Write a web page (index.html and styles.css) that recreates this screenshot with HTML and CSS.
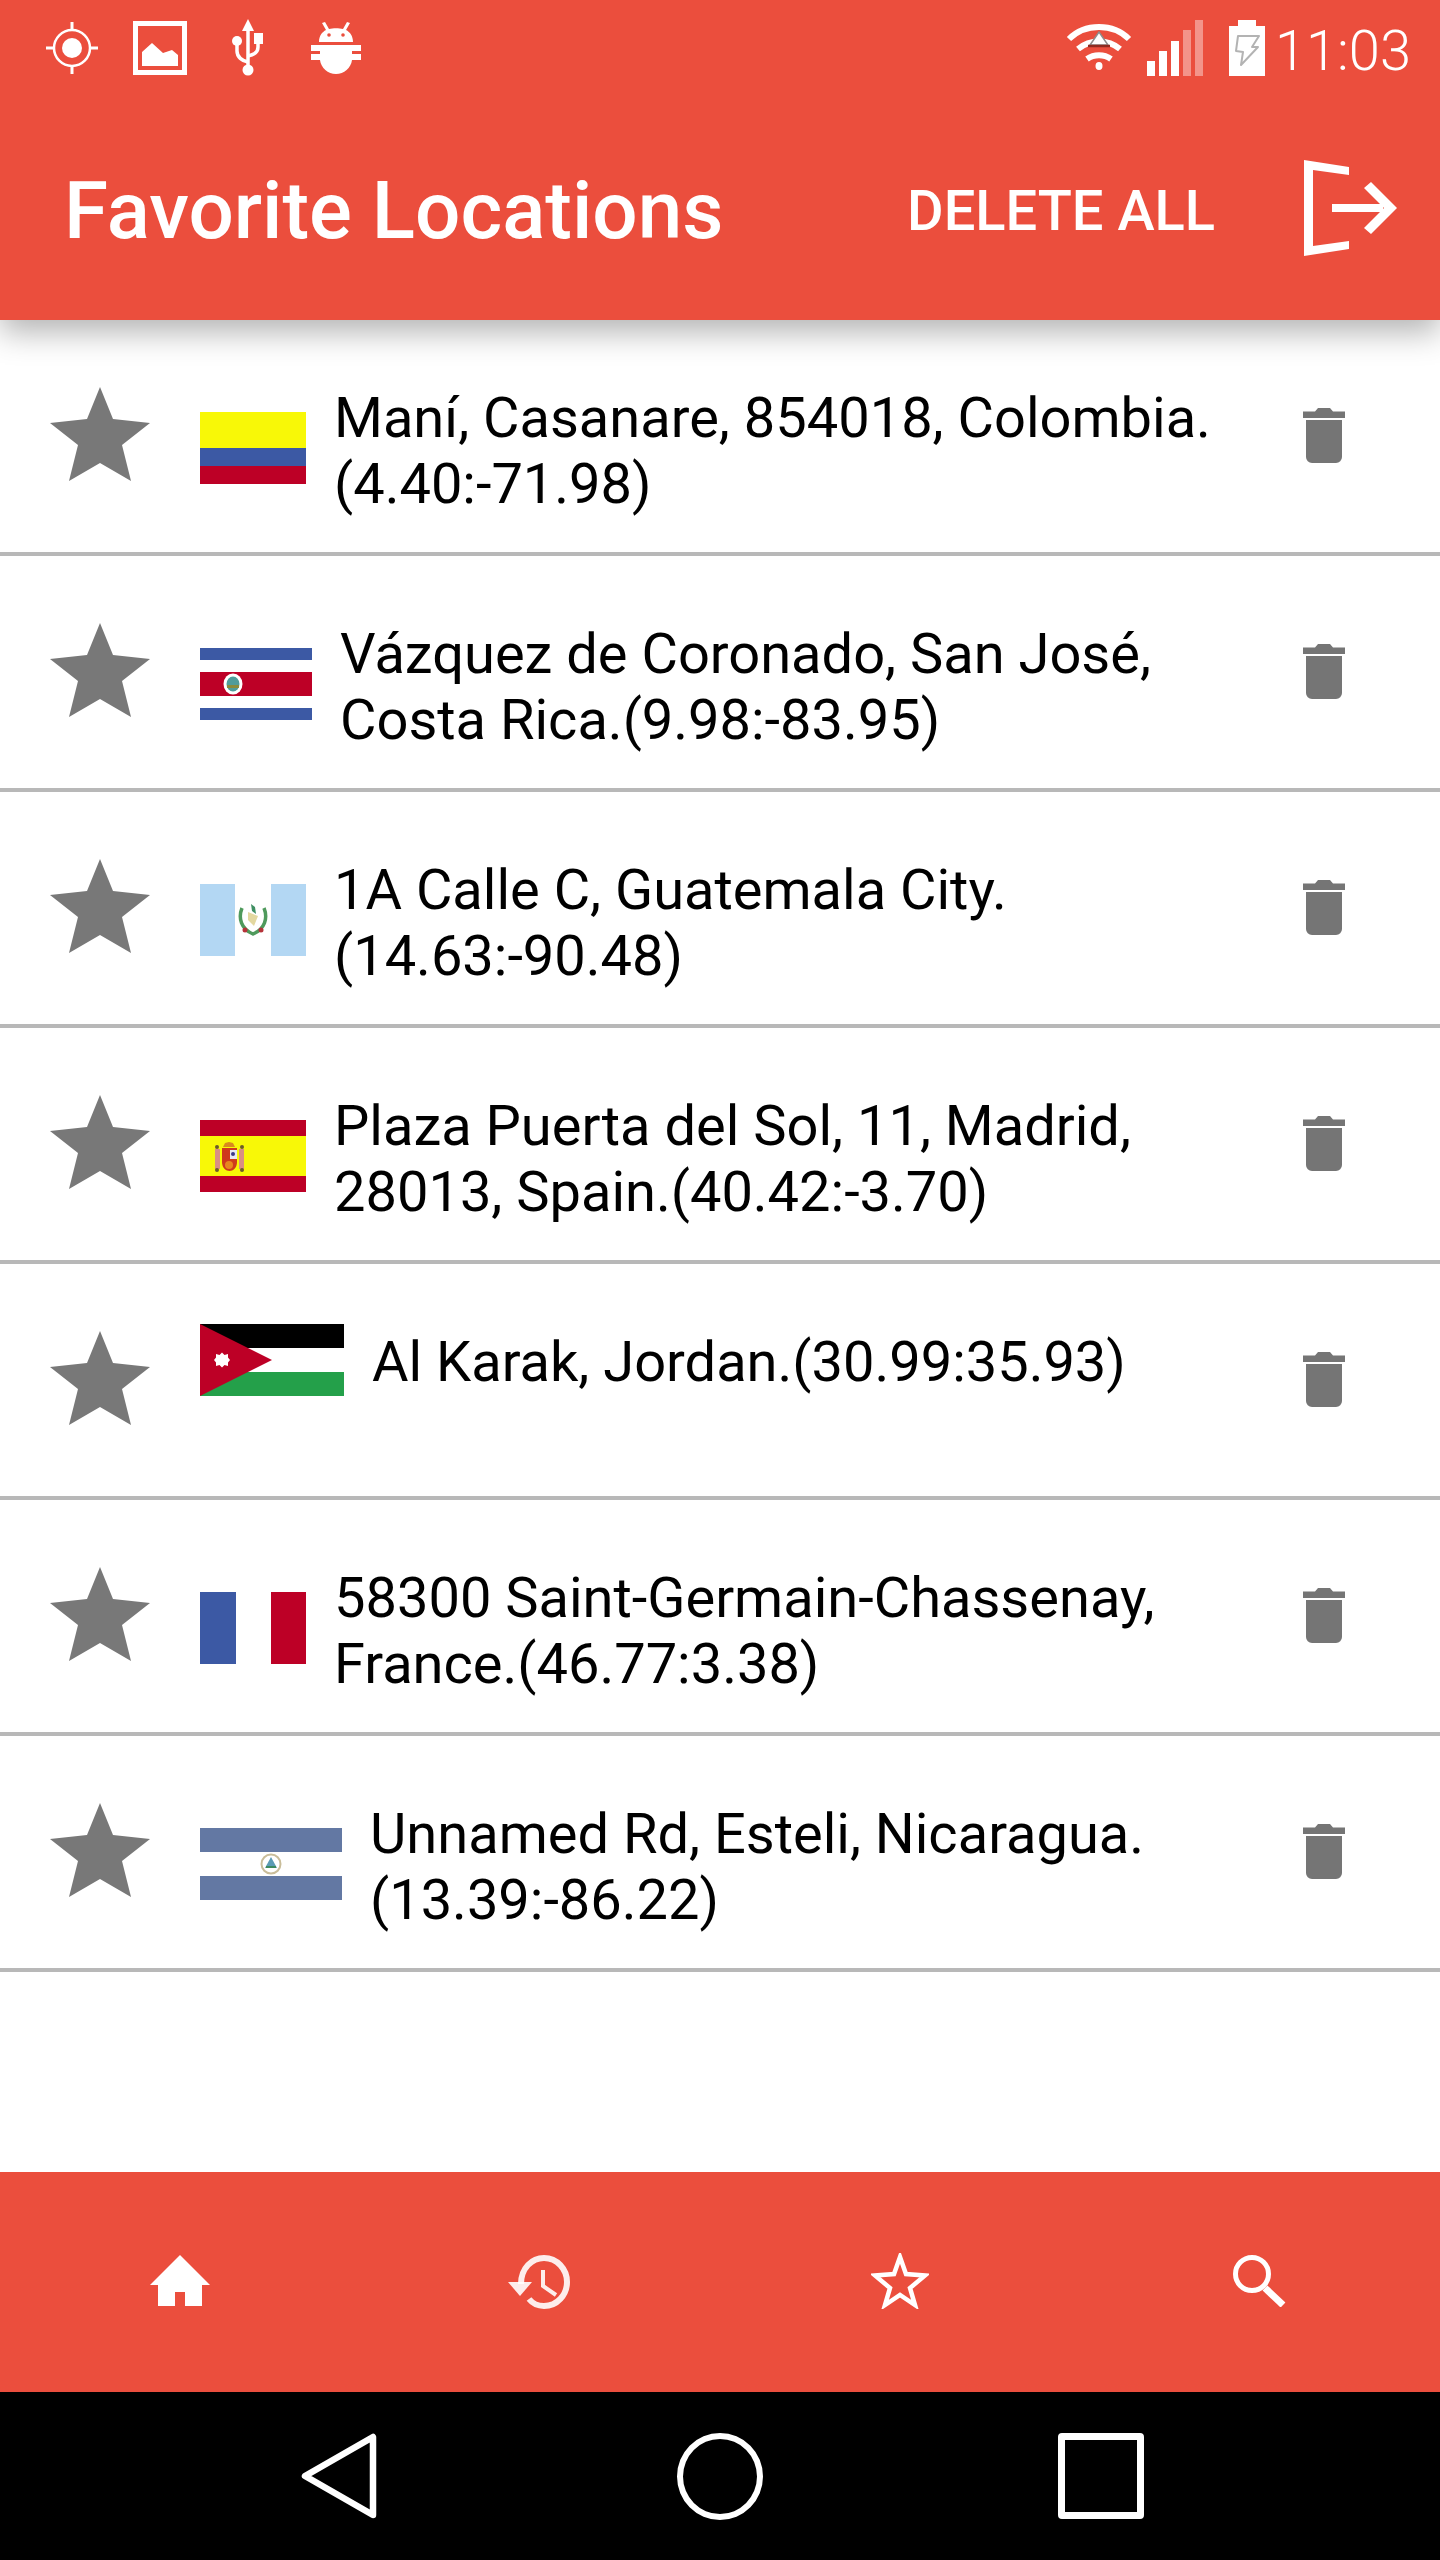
FILE: index.html
```html
<!DOCTYPE html>
<html lang="en">
<head>
  <meta charset="UTF-8" />
  <meta name="viewport" content="width=device-width, initial-scale=1.0" />
  <title>Favorite Locations</title>
  <link rel="stylesheet" href="styles.css">
</head>
<body>
  <svg class="defs" width="0" height="0">
    <defs>
      <symbol id="star" viewBox="0 0 100 94">
        <polygon points="50,0 63,32 100,36 72,58 81,94 50,76 19,94 28,58 0,36 37,32" />
      </symbol>
      <symbol id="trash" viewBox="0 0 42 55">
        <path d="M0 3.500h12l3-3.500h12l3 3.500h12v6.500H0zM3 12h36v37a6 6 0 0 1-6 6H9a6 6 0 0 1-6-6z" />
      </symbol>
    </defs>
  </svg>

  <div class="app">
    <header class="top">
      <div class="status">
        <div class="status-left">
          <svg class="ic-gps" viewBox="0 0 52 52">
            <circle cx="26" cy="26" r="18" fill="none" stroke="#fff" stroke-width="2.500" />
            <circle cx="26" cy="26" r="10" fill="#fff" />
            <path d="M26 0v8M26 44v8M0 26h8M44 26h8" stroke="#fff" stroke-width="3" />
          </svg>
          <svg class="ic-image" viewBox="0 0 54 54">
            <rect x="2.500" y="2.500" width="49" height="49" fill="none" stroke="#fff" stroke-width="5" />
            <path d="M9 31l10-9 11 10 9-3 6 5v11H9z" fill="#fff" />
          </svg>
          <svg class="ic-usb" viewBox="0 0 32 57">
            <path d="M16 0l6 12H10z" fill="#fff" />
            <g fill="none" stroke="#fff" stroke-width="3.500">
              <path d="M16 10v38" />
              <path d="M5 24v8c0 6 5 10 11 11" />
              <path d="M26 24v4c0 5-4 8-10 9" />
            </g>
            <circle cx="5" cy="22" r="5" fill="#fff" />
            <rect x="22" y="14" width="9" height="11" fill="#fff" />
            <circle cx="16" cy="51" r="5.500" fill="#fff" />
          </svg>
          <svg class="ic-android" viewBox="0 0 50 52">
            <path d="M8 20c0-6 3-10 7-12L11 1l3-1 4 7c4-1 10-1 14 0l4-7 3 1-4 7c4 2 7 6 7 12z" fill="#fff" />
            <circle cx="18" cy="13" r="1.800" fill="#eb4e3d" />
            <circle cx="32" cy="13" r="1.800" fill="#eb4e3d" />
            <path d="M0 23h50v6h-9v3h9v6h-9c-1 8-8 14-16 14S10 46 9 38H0v-6h9v-3H0z" fill="#fff" />
          </svg>
        </div>
        <div class="status-right">
          <svg class="ic-wifi" viewBox="0 0 66 48">
            <g fill="none" stroke="#fff" stroke-width="6">
              <path d="M3 17c16-16 44-16 60 0" />
              <path d="M12 27c12-10 30-10 42 0" />
              <path d="M21 37c7-5 17-5 24 0" />
            </g>
            <ellipse cx="33" cy="44" rx="3.500" ry="4" fill="#fff" />
            <path d="M24 23l9-13 9 13z" fill="#fff" stroke="#8d8d8d" stroke-width="1.500" />
            <path d="M22 24h22" stroke="#8f2a20" stroke-width="2.500" />
          </svg>
          <div class="signal">
            <span class="bar bar-1"></span>
            <span class="bar bar-2"></span>
            <span class="bar bar-3"></span>
            <span class="bar bar-4 dim"></span>
            <span class="bar bar-5 dim"></span>
          </div>
          <svg class="ic-battery" viewBox="0 0 36 56">
            <path d="M9 0h18v6h9v50H0V6h9z" fill="#fff" />
            <path d="M9 16h21l-7 11h6L12 45l2-13-7-1z" fill="#fff" stroke="#b3b3b3" stroke-width="2" stroke-linejoin="round" />
          </svg>
          <span class="clock">11:03</span>
        </div>
      </div>
      <div class="toolbar">
        <h1 class="title">Favorite Locations</h1>
        <span class="delete-all">DELETE ALL</span>
        <svg class="ic-logout" viewBox="0 0 93 96">
          <path d="M0 0l45 7v8L9 10v76l36-5v8L0 96z" fill="#fff" />
          <path d="M28 44h51v8H28z" fill="#fff" />
          <path d="M60 28l7-6 26 26-26 26-7-6 20-20z" fill="#fff" />
        </svg>
      </div>
    </header>

    <main class="list">
      <div class="row">
        <svg class="star"><use href="#star" /></svg>
        <svg class="flag w106" viewBox="0 0 106 72">
          <rect width="106" height="36" fill="#f8f807" />
          <rect y="36" width="106" height="18" fill="#3c59a4" />
          <rect y="54" width="106" height="18" fill="#bd0026" />
        </svg>
        <p class="place">Maní, Casanare, 854018, Colombia.<br>(4.40:-71.98)</p>
        <svg class="trash"><use href="#trash" /></svg>
      </div>

      <div class="row">
        <svg class="star"><use href="#star" /></svg>
        <svg class="flag w112" viewBox="0 0 112 72">
          <rect width="112" height="72" fill="#fff" />
          <rect width="112" height="12" fill="#3c59a4" />
          <rect y="24" width="112" height="24" fill="#bd0026" />
          <rect y="60" width="112" height="12" fill="#3c59a4" />
          <ellipse cx="33" cy="36" rx="9.500" ry="10.500" fill="#fff" />
          <ellipse cx="33" cy="36" rx="6.500" ry="7.500" fill="#4f9c9a" />
          <rect x="27" y="37" width="12" height="3" fill="#8b8b3a" />
        </svg>
        <p class="place">Vázquez de Coronado, San José,<br>Costa Rica.(9.98:-83.95)</p>
        <svg class="trash"><use href="#trash" /></svg>
      </div>

      <div class="row">
        <svg class="star"><use href="#star" /></svg>
        <svg class="flag w106" viewBox="0 0 106 72">
          <rect width="106" height="72" fill="#fff" />
          <rect width="35" height="72" fill="#b3d7f3" />
          <rect x="71" width="35" height="72" fill="#b3d7f3" />
          <path d="M42 24c-4 10-1 21 11 26c12-5 15-16 11-26" fill="none" stroke="#4f9a5c" stroke-width="3.500" />
          <path d="M48 28l10 4-4 10-6-6z" fill="#e3d8a0" />
          <path d="M51 20l4 3 1 7-4-3z" fill="#3f8f62" />
          <circle cx="45" cy="46" r="2.500" fill="#b5333a" />
          <circle cx="61" cy="46" r="2.500" fill="#b5333a" />
        </svg>
        <p class="place">1A Calle C, Guatemala City.<br>(14.63:-90.48)</p>
        <svg class="trash"><use href="#trash" /></svg>
      </div>

      <div class="row">
        <svg class="star"><use href="#star" /></svg>
        <svg class="flag w106" viewBox="0 0 106 72">
          <rect width="106" height="72" fill="#bd0026" />
          <rect y="16" width="106" height="40" fill="#f8f807" />
          <rect x="15" y="29" width="5" height="20" fill="#d98f84" />
          <rect x="39" y="29" width="5" height="20" fill="#d98f84" />
          <circle cx="17" cy="27" r="2" fill="#6b5a2a" />
          <circle cx="42" cy="27" r="2" fill="#6b5a2a" />
          <circle cx="17" cy="50" r="2" fill="#6b5a2a" />
          <circle cx="42" cy="50" r="2" fill="#6b5a2a" />
          <path d="M23 27l2-4 4-1 4 1 2 4z" fill="#d98a1e" />
          <path d="M22 28h15v14c0 6-4 9-7.500 9S22 48 22 42z" fill="#cf3a1c" />
          <rect x="30" y="30" width="7" height="9" fill="#e8e8f4" />
          <circle cx="33" cy="34" r="2" fill="#3a3a8a" />
          <circle cx="29" cy="45" r="4" fill="#e8871e" />
        </svg>
        <p class="place">Plaza Puerta del Sol, 11, Madrid,<br>28013, Spain.(40.42:-3.70)</p>
        <svg class="trash"><use href="#trash" /></svg>
      </div>

      <div class="row">
        <svg class="star"><use href="#star" /></svg>
        <svg class="flag w144 flag-high" viewBox="0 0 144 72">
          <rect width="144" height="24" />
          <rect y="24" width="144" height="24" fill="#fff" />
          <rect y="48" width="144" height="24" fill="#24a04a" />
          <polygon points="0,0 72,36 0,72" fill="#bd0026" />
          <polygon points="22,28.500 24.500,31 28,30 28,33.500 30,36 28,38.500 28,42 24.500,41 22,43.500 19.500,41 16,42 16,38.500 14,36 16,33.500 16,30 19.500,31" fill="#fff" />
        </svg>
        <p class="place">Al Karak, Jordan.(30.99:35.93)</p>
        <svg class="trash"><use href="#trash" /></svg>
      </div>

      <div class="row">
        <svg class="star"><use href="#star" /></svg>
        <svg class="flag w106" viewBox="0 0 106 72">
          <rect width="36" height="72" fill="#3c59a4" />
          <rect x="36" width="35" height="72" fill="#fff" />
          <rect x="71" width="35" height="72" fill="#bd0026" />
        </svg>
        <p class="place">58300 Saint-Germain-Chassenay,<br>France.(46.77:3.38)</p>
        <svg class="trash"><use href="#trash" /></svg>
      </div>

      <div class="row">
        <svg class="star"><use href="#star" /></svg>
        <svg class="flag w142" viewBox="0 0 142 72">
          <rect width="142" height="72" fill="#fff" />
          <rect width="142" height="24" fill="#6378a3" />
          <rect y="48" width="142" height="24" fill="#6378a3" />
          <circle cx="71" cy="36" r="9.500" fill="#fff" stroke="#c9bd9a" stroke-width="2" />
          <polygon points="71,29 77,40 65,40" fill="#5b9bb5" />
          <rect x="66" y="38" width="10" height="2" fill="#3d8a5f" />
        </svg>
        <p class="place">Unnamed Rd, Esteli, Nicaragua.<br>(13.39:-86.22)</p>
        <svg class="trash"><use href="#trash" /></svg>
      </div>
    </main>

    <nav class="tabs">
      <svg class="tab-home" viewBox="0 0 60 51">
        <path d="M30 0l30 30h-8v21H35V37H25v14H8V30H0z" fill="#fff" />
      </svg>
      <svg class="tab-history" viewBox="0 0 62 54">
        <g fill="none" stroke="#fff" stroke-opacity=".9">
          <path d="M13 29C13 13 24 3 36 3c13 0 23 11 23 24S49 51 36 51c-6 0-11-2-15-7" stroke-width="6" />
          <path d="M35 15v16l13 9" stroke-width="4" />
        </g>
        <path d="M0 27h24L12 41z" fill="#fff" fill-opacity=".9" />
      </svg>
      <svg class="tab-star" viewBox="0 0 58 56">
        <polygon points="29,4 35,21 54,22.500 39,35 44,52 29,42 14,52 19,35 4,22.500 23,21" fill="none" stroke="#fff" stroke-width="4.500" />
      </svg>
      <svg class="tab-search" viewBox="0 0 53 52">
        <circle cx="19" cy="19" r="16.500" fill="none" stroke="#fff" stroke-width="5" />
        <path d="M32 33l18 17" stroke="#fff" stroke-width="7" />
      </svg>
    </nav>

    <footer class="softkeys">
      <svg class="key" viewBox="0 0 76 86">
        <path d="M4 43L72 4v78z" fill="none" stroke="#fff" stroke-width="6.500" stroke-linejoin="round" />
      </svg>
      <div class="key-circle"></div>
      <div class="key-square"></div>
    </footer>
  </div>
</body>
</html>
```

FILE: styles.css
```css
* {
  box-sizing: border-box;
}

body {
  margin: 0;
  font-family: Roboto, "Liberation Sans", sans-serif;
  background: #fff;
}

.defs {
  display: block;
  height: 0;
}

.app {
  width: 1440px;
  height: 2560px;
  display: flex;
  flex-direction: column;
}

/* header */
.top {
  height: 320px;
  background: #eb4e3d;
  color: #fff;
  box-shadow: 0 12px 30px rgba(0, 0, 0, 0.3);
  position: relative;
  z-index: 1;
}

.status {
  height: 96px;
  display: flex;
  justify-content: space-between;
  padding: 19px 29px 0 46px;
}

.status-left {
  display: flex;
  align-items: flex-start;
}

.ic-gps {
  width: 52px;
  height: 52px;
  margin-top: 3px;
  margin-right: 35px;
}

.ic-image {
  width: 54px;
  height: 54px;
  margin-top: 2px;
  margin-right: 45px;
}

.ic-usb {
  width: 32px;
  height: 57px;
  margin-right: 47px;
}

.ic-android {
  width: 50px;
  height: 52px;
  margin-top: 3px;
}

.status-right {
  display: flex;
  align-items: flex-start;
}

.ic-wifi {
  width: 66px;
  height: 48px;
  margin-top: 3px;
  margin-right: 15px;
}

.signal {
  display: flex;
  align-items: flex-end;
  gap: 4px;
  height: 56px;
  margin-top: 1px;
  margin-right: 26px;
}

.bar {
  width: 8px;
  background: #fff;
}

.bar.dim {
  opacity: 0.4;
}

.bar-1 { height: 15px; }
.bar-2 { height: 25px; }
.bar-3 { height: 35px; }
.bar-4 { height: 46px; }
.bar-5 { height: 56px; }

.ic-battery {
  width: 36px;
  height: 56px;
  margin-top: 1px;
  margin-right: 10px;
}

.clock {
  font-size: 56px;
  font-weight: 300;
  line-height: 64px;
}

.toolbar {
  height: 224px;
  display: flex;
  align-items: center;
  padding: 0 43px 0 64px;
}

.title {
  margin: 6px 0 0;
  flex: 1;
  font-size: 80px;
  font-weight: 500;
  line-height: 96px;
}

.delete-all {
  font-size: 56px;
  font-weight: 500;
  margin: 6px 89px 0 0;
}

.ic-logout {
  width: 93px;
  height: 96px;
}

/* list */
.list {
  flex: 1;
}

.row {
  height: 236px;
  border-bottom: 4px solid #b8b8b8;
  display: flex;
  align-items: flex-start;
  padding: 0 95px 0 50px;
}

.star {
  width: 100px;
  height: 94px;
  margin-top: 67px;
  margin-right: 50px;
  flex: none;
  fill: #787878;
}

.flag {
  height: 72px;
  margin-top: 92px;
  flex: none;
}

.flag-high {
  margin-top: 60px;
}

.w106 { width: 106px; }
.w112 { width: 112px; }
.w142 { width: 142px; }
.w144 { width: 144px; }

.place {
  margin: 65px 0 0 28px;
  font-size: 56px;
  line-height: 66px;
  color: #000;
  white-space: nowrap;
}

.trash {
  width: 42px;
  height: 55px;
  fill: #757575;
  margin-top: 88px;
  margin-left: auto;
  flex: none;
}

/* bottom tabs */
.tabs {
  height: 220px;
  background: #eb4e3d;
  display: flex;
  align-items: flex-start;
  padding-top: 81px;
  padding-left: 150px;
}

.tab-home {
  width: 60px;
  height: 51px;
  margin-top: 2px;
  margin-right: 298px;
}

.tab-history {
  width: 62px;
  height: 54px;
  margin-top: 2px;
  margin-right: 301px;
}

.tab-star {
  width: 58px;
  height: 56px;
  margin-right: 304px;
}

.tab-search {
  width: 53px;
  height: 52px;
  margin-top: 2px;
}

/* android keys */
.softkeys {
  height: 168px;
  background: #000;
  display: flex;
  align-items: flex-start;
  padding-top: 41px;
  padding-left: 301px;
}

.key {
  width: 76px;
  height: 86px;
  margin-right: 300px;
}

.key-circle {
  width: 86px;
  height: 87px;
  border: 6px solid #fff;
  border-radius: 50%;
  margin-right: 295px;
}

.key-square {
  width: 86px;
  height: 86px;
  border: 7px solid #fff;
  border-radius: 4px;
}
```
